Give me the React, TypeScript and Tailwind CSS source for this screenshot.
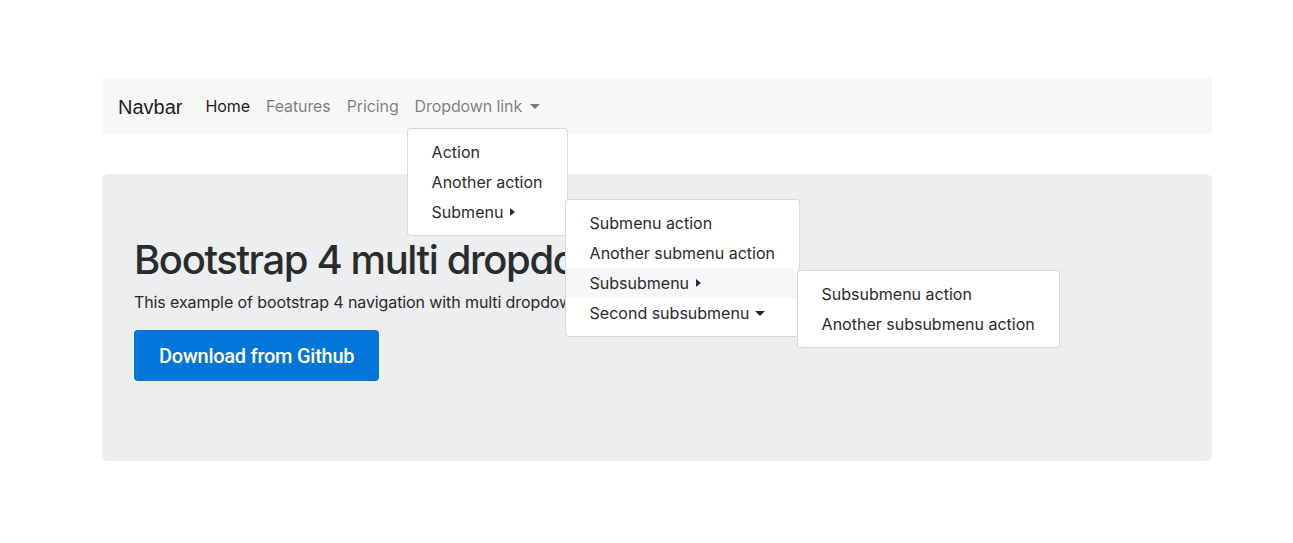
import React from 'react';

const RightCaret: React.FC = () => (
    <svg width="5" height="8" viewBox="0 0 5 8" className="ml-[7px] inline-block">
        <path d="M0 0 L5 4 L0 8 Z" fill="currentColor" />
    </svg>
);

const DownCaret: React.FC<{ className?: string }> = ({ className = '' }) => (
    <svg width="10" height="5" viewBox="0 0 10 5" className={`inline-block ${className}`}>
        <path d="M0 0 L10 0 L5 5 Z" fill="currentColor" />
    </svg>
);

const menuCls = 'absolute z-10 bg-white border border-black/15 rounded-[4px] py-2 text-[16px] text-[#292b2c] whitespace-nowrap';
const itemCls = 'relative flex items-center h-[30px] px-6 leading-none tracking-normal';

const App: React.FC = () => {
    return (
        <div className="min-h-[543px] bg-white pt-[78px] font-['Inter',sans-serif]">
            <div className="ml-[102px] w-[1110px]">
                <nav className="h-[56px] bg-[#f7f7f7] flex items-center px-4">
                    <span className="font-['Liberation_Sans',Arial,sans-serif] text-[20px] text-black/90 mr-[15px] mt-[1px]">
                        Navbar
                    </span>
                    <ul className="flex items-center text-[16px] tracking-[-0.1px]">
                        <li className="px-2 text-black/90">Home</li>
                        <li className="px-2 text-black/50">Features</li>
                        <li className="px-2 text-black/50">Pricing</li>
                        <li className="relative px-2 text-black/50 flex items-center">
                            Dropdown link
                            <DownCaret className="ml-[8px] mt-[1px]" />
                            <div className={`${menuCls} left-0 top-[34px] w-[161px]`}>
                                <div className={itemCls}>Action</div>
                                <div className={itemCls}>Another action</div>
                                <div className={itemCls}>
                                    Submenu
                                    <RightCaret />
                                    <div className={`${menuCls} left-[157px] top-[2px]`}>
                                        <div className={itemCls}>Submenu action</div>
                                        <div className={itemCls}>Another submenu action</div>
                                        <div className={`${itemCls} bg-[#f7f7f9]`}>
                                            Subsubmenu
                                            <RightCaret />
                                            <div className={`${menuCls} left-[231px] top-[2px]`}>
                                                <div className={itemCls}>Subsubmenu action</div>
                                                <div className={itemCls}>Another subsubmenu action</div>
                                            </div>
                                        </div>
                                        <div className={itemCls}>
                                            Second subsubmenu
                                            <DownCaret className="ml-[6px] mt-[1px]" />
                                        </div>
                                    </div>
                                </div>
                            </div>
                        </li>
                    </ul>
                </nav>

                <section className="mt-[40px] bg-[#eceeef] rounded-[6px] px-8 pt-16 pb-16 text-[#292b2c]">
                    <h1 className="text-[40px] leading-[44px] font-medium mb-2 tracking-[-1.4px]">
                        Bootstrap 4 multi dropdown navbar
                    </h1>
                    <p className="text-[16px] leading-[24px] mb-4 tracking-[-0.1px]">
                        This example of bootstrap 4 navigation with multi dropdown menu.
                    </p>
                    <p className="mb-4">
                        <button className="h-[51px] px-[25px] bg-[#0275d8] text-white rounded-[4px] text-[20px] font-medium tracking-[-0.25px] font-['Roboto',Arial,sans-serif]">
                            Download from Github
                        </button>
                    </p>
                </section>
            </div>
        </div>
    );
};

export default App;
